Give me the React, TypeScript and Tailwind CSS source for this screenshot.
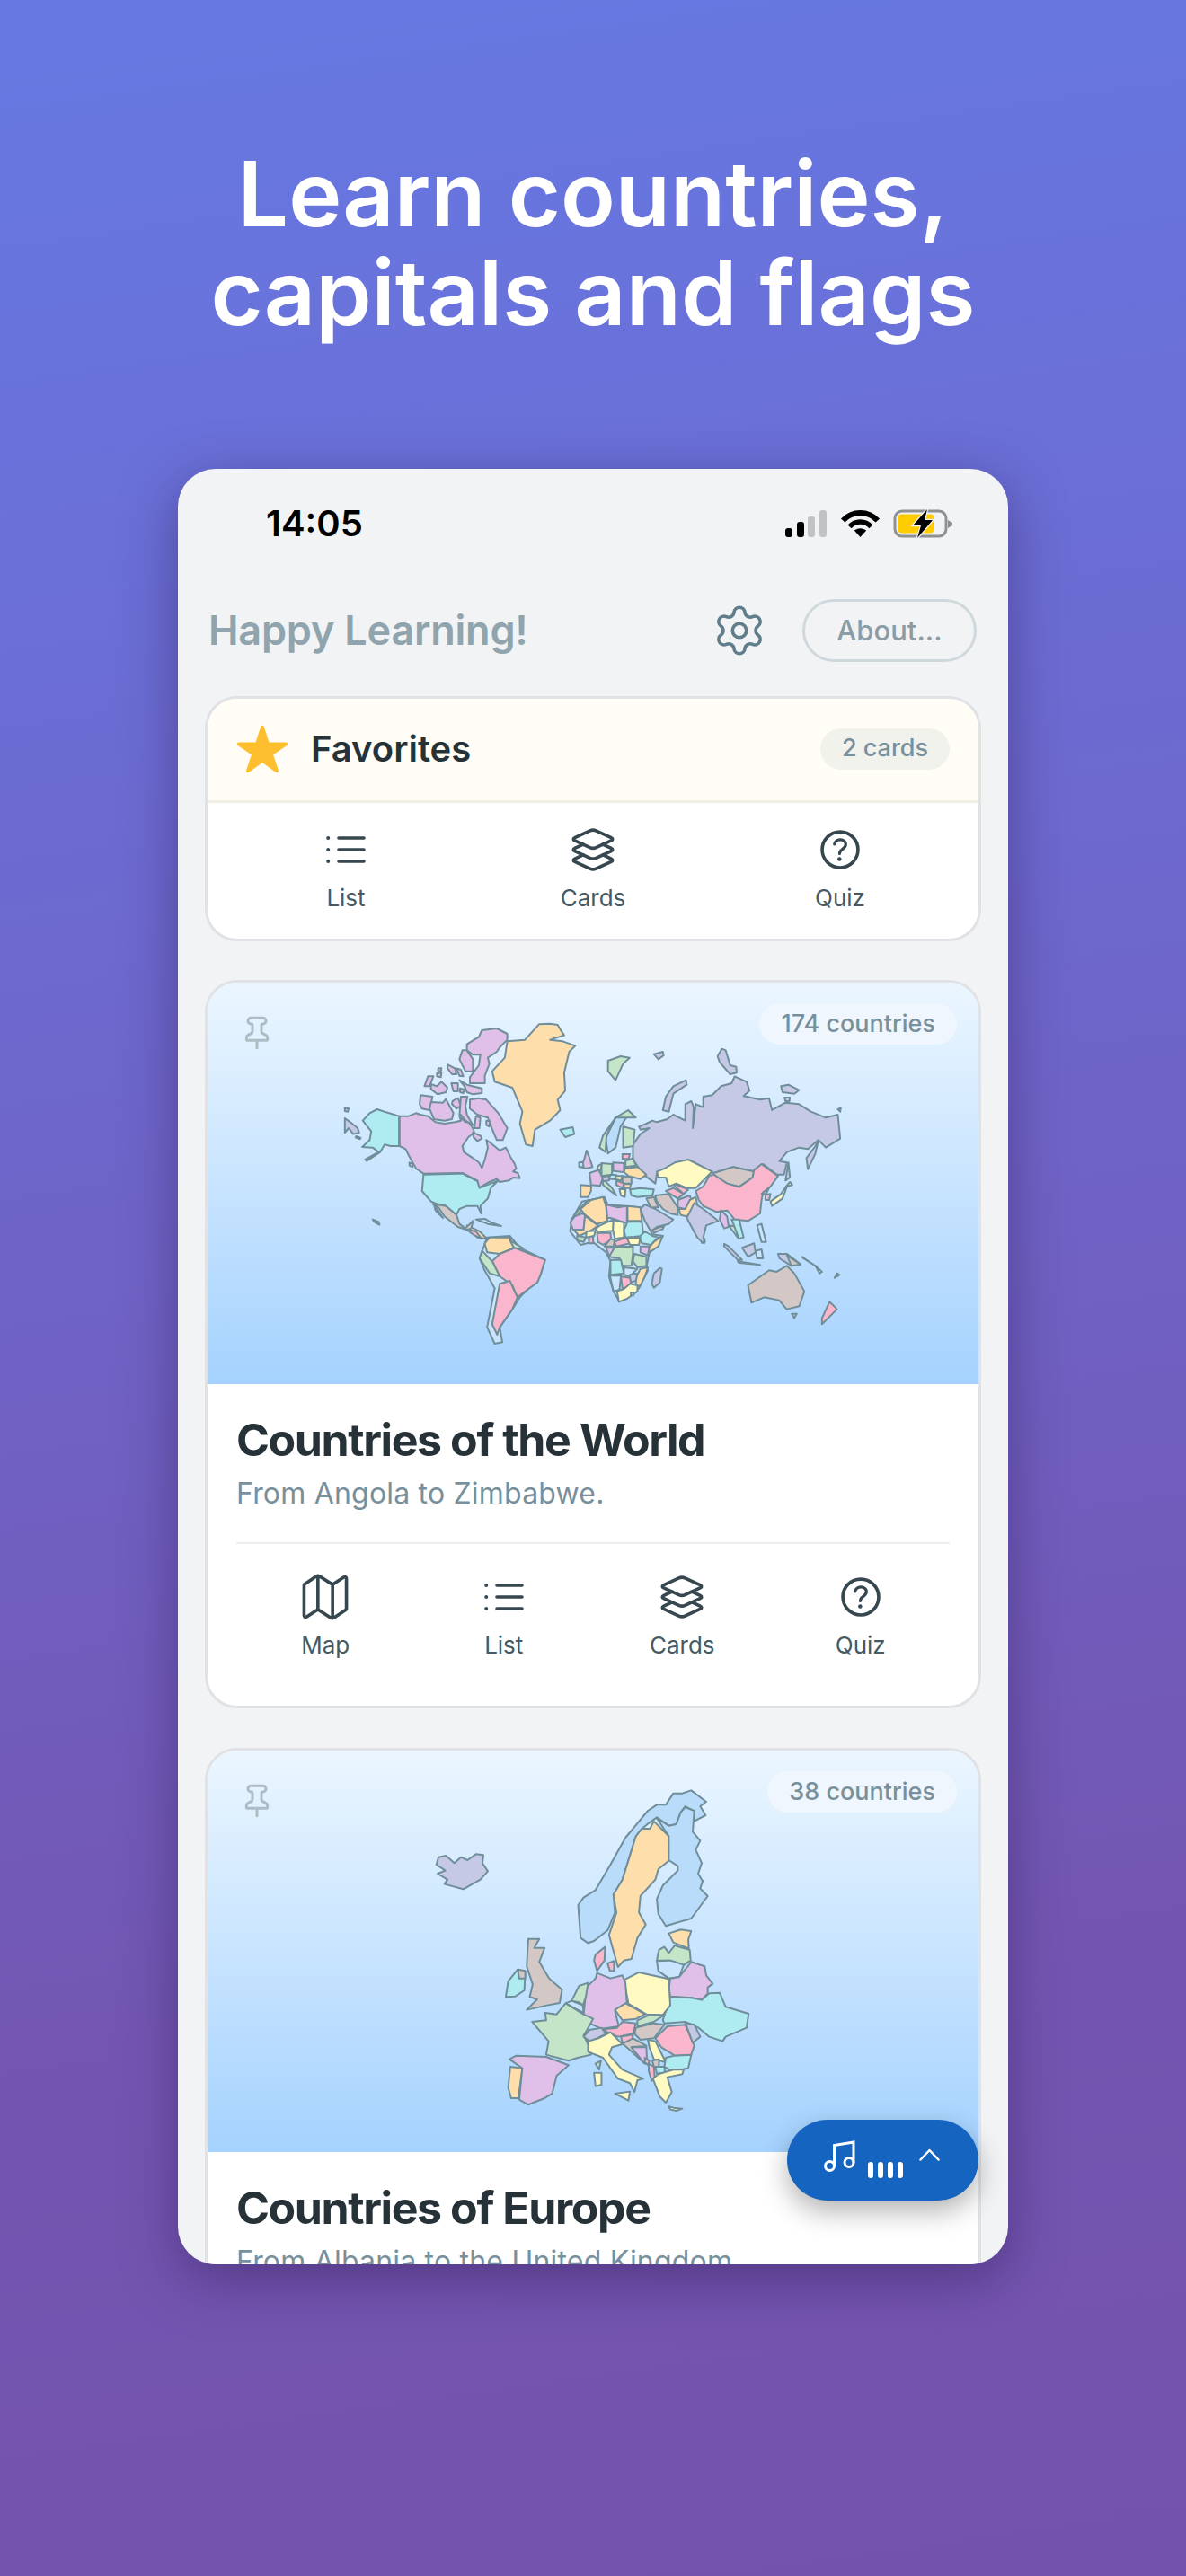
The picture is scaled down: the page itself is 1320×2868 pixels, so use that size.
import type { FC, ReactNode } from "react";
import { IoHelpCircleOutline, IoLayersOutline, IoMapOutline, IoStar } from "react-icons/io5";
import { Pin, Settings } from "lucide-react";

const purple = "#e0bfe8";
const cyan = "#aeecf2";
const orange = "#fedeab";
const lav = "#c5c9e6";
const yellow = "#fff9c2";
const pink = "#f9b6cc";
const green = "#c5e5c8";
const taupe = "#d4c8c6";
const water = "#c9e4fd";
const nordic = "#b8dcfa";

type Shape = [string, string];

const greenlandSouth: Shape[] = [
  [orange, "678,178 700,176 715,180 722,200 728,215 700,230 725,235 750,250 738,270 735,290 728,340 730,400 715,430 720,465 700,500 670,530 665,585 652,580 640,510 645,470 625,390 590,370 585,335 610,290 615,235 650,230"],
  [cyan, "720,530 745,522 748,545 730,555"],
  [green, "815,300 840,285 858,290 845,310 830,365 815,335"],
  [nordic, "855,480 840,520 830,590 815,610 810,560 830,490"],
  [green, "855,465 870,490 830,490 812,550 810,605 798,590 805,550 830,490"],
  [green, "845,520 868,530 865,585 845,590"],
  [water, "575,890 620,885 640,925 690,965 680,1020 640,1090 625,1130 600,1190 605,1240 590,1245 575,1190 590,1060 570,1000 560,960"],
  [orange, "580,890 620,890 628,925 600,945 575,940 570,910"],
  [green, "620,900 645,925 630,930"],
  [pink, "600,945 630,925 660,945 690,965 682,1010 675,1040 635,1090 625,1050 600,1020 585,970"],
  [green, "565,935 585,970 600,1020 580,1010 560,960"],
  [pink, "600,1045 620,1035 635,1090 625,1130 600,1190 595,1215 585,1180"],
  [orange, "535,850 555,890 575,895 560,870"],
  [taupe, "1135,1000 1150,1005 1170,985 1185,1010 1205,1070 1195,1120 1170,1130 1155,1100 1125,1090 1100,1108 1093,1050"],
  [taupe, "1180,1145 1190,1145 1185,1160"],
  [pink, "1255,1105 1270,1130 1240,1180 1240,1160"],
  [water, "1227,985 1240,1005 1235,1010"],
  [water, "1270,1010 1275,1015 1265,1025"],
];

const northAmerica: Shape[] = [
  [purple, "195,305 225,305 250,295 265,300 290,305 315,325 345,330 380,325 400,320 395,305 415,325 425,325 440,345 445,360 425,375 405,405 410,425 440,445 460,460 470,478 480,450 490,410 485,385 500,395 530,420 550,410 565,440 580,465 585,480 575,490 590,495 597,512 575,510 560,520 530,525 520,515 495,525 460,545 455,520 405,495 275,497 250,480 225,435 215,415 195,405"],
  [cyan, "120,282 150,292 193,305 193,405 165,405 145,400 130,425 85,455 80,450 125,425 105,410 70,408 95,385 100,355 72,320 95,295"],
  [lav, "12,312 30,325 55,345 60,360 40,365 25,345 12,360"],
  [lav, "12,278 25,280 22,290 12,288"],
  [lav, "50,372 65,378 62,382 48,376"],
  [purple, "420,65 460,40 470,18 520,12 555,30 555,50 530,75 520,90 490,110 495,130 480,170 480,195 430,195 430,175 460,135 465,100 440,100 420,85"],
  [purple, "405,85 420,85 440,115 440,155 415,155 395,115"],
  [purple, "356,133 380,145 385,165 370,165 355,145"],
  [purple, "385,145 400,150 408,172 395,170"],
  [purple, "325,145 335,145 333,155 323,152"],
  [purple, "320,162 335,160 333,175 320,172"],
  [purple, "290,172 308,172 295,205 278,205"],
  [purple, "300,198 320,205 335,190 355,210 350,225 322,232 300,215"],
  [purple, "368,195 390,195 390,222 375,222"],
  [purple, "395,185 420,200 470,212 470,228 440,232 420,225 412,205"],
  [purple, "397,212 410,215 408,228 397,225"],
  [purple, "265,235 305,240 295,285 270,280 262,265"],
  [purple, "300,258 340,260 350,248 375,295 370,315 345,320 310,315 295,280"],
  [purple, "372,255 390,245 400,270 385,280 370,265"],
  [purple, "400,240 422,240 415,270 420,300 440,335 415,320 400,300 395,305"],
  [purple, "430,250 460,245 485,250 525,295 555,345 540,385 520,385 505,350 490,310 455,300 430,280"],
  [purple, "450,305 465,310 462,345 445,345"],
  [purple, "485,320 497,322 495,340 485,335"],
  [purple, "440,360 465,370 470,380 455,388 442,375"],
  [purple, "228,460 240,465 238,475 228,470"],
  [cyan, "275,500 405,497 455,522 462,545 500,530 525,520 500,545 490,580 465,605 468,630 455,605 420,605 395,615 385,635 350,605 320,598 300,590 270,555"],
  [taupe, "305,598 350,605 385,635 395,665 415,680 440,655 435,680 420,685 390,675 345,640 325,610"],
  [taupe, "310,600 340,645 315,620"],
  [lav, "105,650 125,658 128,668 110,658"],
  [water, "450,650 480,648 500,660 535,672 490,665"],
  [pink, "420,685 450,690 470,715 440,700"],
];

const asia: Shape[] = [
  [lav, "15,340 40,305 70,285 40,290 35,280 60,270 80,260 95,265 130,255 150,240 190,260 190,205 210,195 218,215 215,285 225,205 250,215 250,180 280,175 310,145 345,135 355,112 395,130 405,160 385,178 440,190 470,185 480,225 525,200 570,205 610,230 660,250 700,240 708,320 660,350 635,325 600,355 570,350 530,365 505,395 530,400 520,440 495,440 450,405 420,430 350,415 285,435 265,425 210,395 155,410 95,435 90,470 50,440 15,390"],
  [lav, "312,20 325,25 340,75 360,80 362,100 340,105 305,65 298,45"],
  [lav, "192,125 195,140 150,170 135,230 115,225 125,180 150,145"],
  [lav, "85,38 115,30 118,42 100,55"],
  [lav, "510,145 535,140 570,158 555,170 515,165"],
  [lav, "522,183 540,183 538,195 525,195"],
  [lav, "700,222 710,218 708,230"],
  [lav, "635,325 625,370 600,422 595,385 625,345"],
  [lav, "535,400 540,450 525,460"],
  [taupe, "285,435 350,415 420,430 415,450 370,480 330,470 285,450"],
  [pink, "225,495 250,480 270,445 285,440 330,470 370,482 415,450 420,425 445,405 465,420 500,445 475,480 450,500 445,525 440,570 400,595 355,590 330,560 295,565 250,545 235,525"],
  [yellow, "445,505 470,485 460,505"],
  [pink, "458,508 475,505 470,525 458,525"],
  [yellow, "540,465 548,475 530,480 515,520 480,545 475,530 510,505 527,480"],
  [purple, "310,560 330,580 335,615 320,620 305,590"],
  [green, "335,610 365,615 378,640 365,650 350,630"],
  [cyan, "345,590 370,590 385,650 370,655"],
  [lav, "320,672 335,680 380,725 365,725 320,680"],
  [water, "365,730 440,742 370,735"],
  [lav, "380,685 420,670 425,700 400,715"],
  [water, "430,610 445,605 460,665 445,665"],
  [water, "425,695 445,690 450,720 430,720"],
  [lav, "500,705 530,705 575,740 545,745 505,720"],
  [taupe, "530,710 575,740 545,745"],
  [water, "580,715 625,745 585,720"],
  [lav, "245,655 255,655 255,668 245,668"],
];

const afroEurasia: Shape[] = [
  [water, "55,170 130,155 140,180 200,185 250,190 265,230 290,280 325,285 280,340 270,390 275,400 245,460 215,480 180,505 160,470 145,420 150,370 135,340 90,305 50,315 15,270 20,230"],
  [green, "45,195 75,165 85,170 55,195 25,235 18,232"],
  [orange, "85,165 125,155 135,185 140,235 105,245 65,215 50,195"],
  [purple, "135,180 175,190 205,185 205,240 195,240 150,225 140,225"],
  [orange, "207,185 250,190 255,235 207,235"],
  [purple, "30,220 55,210 65,215 60,265 25,265 15,240"],
  [orange, "65,218 105,248 110,250 80,270 45,285 28,265 60,265"],
  [yellow, "115,250 160,230 160,268 130,270 110,275 100,262"],
  [yellow, "160,232 195,240 195,290 165,295 158,265"],
  [cyan, "207,238 255,238 260,285 200,290 195,265"],
  [cyan, "265,270 290,285 310,290 285,315 255,310 245,290"],
  [orange, "325,285 310,320 280,340 278,325 295,305 315,290"],
  [pink, "105,275 150,275 152,300 125,315 108,305"],
  [yellow, "70,270 100,268 95,285 68,290"],
  [pink, "78,288 92,288 92,310 78,310"],
  [green, "38,285 68,290 60,305 40,300"],
  [taupe, "150,295 165,300 160,320 130,320"],
  [pink, "162,305 205,290 215,310 170,320"],
  [yellow, "205,292 250,290 245,315 215,315"],
  [purple, "135,325 160,325 160,350 145,350"],
  [green, "165,322 225,320 225,345 220,385 190,385 180,360 145,355"],
  [purple, "250,320 280,320 275,350 250,340"],
  [green, "230,345 270,355 270,385 240,390 225,370"],
  [cyan, "150,365 185,365 190,390 195,410 150,415"],
  [water, "195,390 240,395 215,420 195,415"],
  [orange, "250,395 275,390 265,420 250,450 235,455 235,425"],
  [lav, "215,415 240,410 235,435 215,440"],
  [water, "148,418 185,418 180,465 160,470"],
  [pink, "185,420 215,425 220,450 190,462"],
  [yellow, "172,470 195,462 215,445 240,450 240,470 205,495 178,505"],
  [taupe, "218,474 227,474 227,484 218,484"],
  [lav, "315,392 322,395 315,440 295,458 288,445 295,410"],
  [lav, "250,195 265,180 300,195 350,225 360,230 345,245 305,255 285,270 265,235"],
  [taupe, "290,265 330,250 325,262 295,275"],
  [cyan, "215,130 250,125 295,130 290,150 240,155 220,150"],
  [taupe, "300,150 345,145 375,190 375,215 350,210 325,195 305,170"],
  [taupe, "270,160 295,155 310,190 285,190"],
  [purple, "375,165 415,150 420,165 400,195 375,190"],
  [orange, "415,165 435,155 440,180 405,220 385,215 378,195 400,195"],
  [pink, "335,135 360,125 395,145 375,160"],
  [pink, "350,105 385,120 410,130 395,145 360,115"],
  [yellow, "305,70 330,60 365,40 410,30 440,45 490,70 455,105 435,125 405,125 370,110 345,120 335,90 310,90"],
  [lav, "430,175 460,195 510,235 470,250 460,290 465,305 455,305 440,290 405,225"],
  [purple, "70,0 78,20 90,55 68,60 50,55 62,30"],
  [cyan, "45,40 58,38 60,55 45,55"],
  [purple, "80,75 110,65 125,90 115,118 85,115"],
  [orange, "50,115 85,118 85,135 75,155 50,155"],
  [green, "120,42 155,45 155,80 120,85"],
  [purple, "158,40 195,42 195,72 160,68"],
  [orange, "198,60 240,55 270,80 250,95 210,85 195,72"],
  [green, "200,35 225,25 235,50 200,55"],
  [pink, "190,12 215,12 210,28 190,28"],
  [taupe, "190,85 220,90 220,110 190,110"],
  [green, "125,95 155,125 170,150 150,135 125,115"],
  [yellow, "165,85 190,85 185,100 165,95"],
  [pink, "170,100 195,110 190,125 170,115"],
  [orange, "195,112 218,112 215,125 195,125"],
  [yellow, "180,128 200,130 198,155 185,150"],
  [cyan, "150,80 170,82 165,95 145,95"],
  [lav, "122,88 145,85 145,100 125,102"],
  [orange, "110,50 120,45 118,65 105,62"],
];

const europe: Shape[] = [
  [lav, "18,270 25,245 50,240 78,265 100,245 122,255 150,235 175,238 172,265 190,292 165,320 108,352 45,335 55,320 22,300 48,290"],
  [nordic, "785,70 810,32 840,32 870,22 920,60 900,75 918,105 880,125 875,90 850,75 835,95 820,135 795,140 755,112 730,130 705,150 685,175 640,320 610,370 615,430 590,490 545,525 525,532 500,515 492,405 510,380 550,355 600,270 650,180 725,90 755,70"],
  [orange, "745,125 795,175 798,255 760,285 750,320 700,375 695,430 718,470 690,515 670,585 645,590 625,612 595,505 620,430 610,370 640,320 685,175 705,150 732,150"],
  [nordic, "835,95 850,78 880,90 875,160 900,190 885,220 905,265 893,300 908,325 900,350 925,375 870,450 785,475 760,435 755,385 775,340 825,290 825,275 795,255 795,175 755,115 795,140 820,135"],
  [orange, "795,500 835,487 870,492 860,520 862,550 810,530"],
  [green, "755,590 762,555 780,545 795,565 815,540 865,555 868,590 845,605 800,590"],
  [water, "755,592 800,590 845,605 830,645 795,650 760,625"],
  [purple, "800,650 830,645 870,595 915,610 920,640 942,668 925,680 925,700 905,722 870,715 800,710 795,690"],
  [cyan, "800,712 870,715 905,722 930,700 965,698 985,745 1062,768 1055,815 985,845 975,860 930,845 895,815 850,795 780,800 775,790"],
  [yellow, "645,655 695,630 795,652 800,740 775,772 720,770 660,735"],
  [purple, "555,632 600,650 640,640 650,665 655,735 615,760 628,810 570,818 530,800 510,770 520,680 550,650"],
  [pink, "550,570 582,545 580,590 555,625 545,590"],
  [pink, "590,600 612,592 612,625 598,625"],
  [water, "470,725 508,740 510,765 480,750 450,733"],
  [green, "470,725 495,675 525,665 518,710 508,740 495,730"],
  [green, "450,733 510,770 542,785 520,825 510,840 530,880 535,905 490,915 460,925 385,905 393,860 338,795 385,790 382,765 420,770"],
  [taupe, "325,518 362,518 345,548 380,548 362,595 395,650 438,688 430,732 388,740 320,755 355,720 330,712 340,670 320,610"],
  [cyan, "290,620 315,630 312,690 282,710 250,712 258,660"],
  [taupe, "290,620 315,625 315,650 295,650"],
  [purple, "262,920 285,908 385,912 460,940 420,975 405,1035 380,1050 325,1072 295,1055 305,950"],
  [orange, "265,945 305,950 292,1050 268,1050 258,1015"],
  [orange, "615,755 650,733 690,755 715,770 685,785 640,790"],
  [green, "690,790 730,772 775,775 745,795 690,810"],
  [taupe, "685,815 745,800 780,805 745,850 700,855 680,835"],
  [pink, "575,820 622,815 640,795 685,800 675,835 625,845 590,830"],
  [lav, "510,845 530,822 570,815 585,835 555,850 530,860"],
  [yellow, "525,860 560,850 600,830 640,870 605,880 595,905 640,955 710,985 690,990 680,1030 665,1000 625,985 575,915 525,895"],
  [yellow, "545,965 570,965 570,1005 550,1010"],
  [green, "550,935 568,925 562,955"],
  [yellow, "615,1035 665,1028 660,1058"],
  [pink, "635,845 675,838 672,862 640,865"],
  [taupe, "640,868 675,850 720,875 670,880 715,935 660,885"],
  [purple, "670,880 720,880 722,925 710,930"],
  [yellow, "725,855 750,860 785,930 745,920 730,880"],
  [pink, "750,850 790,810 850,805 880,875 870,905 815,908 770,880"],
  [lav, "850,798 880,805 900,845 875,865"],
  [cyan, "785,915 815,908 870,905 860,950 805,960 780,945"],
  [cyan, "750,945 780,945 782,965 755,968"],
  [pink, "728,935 745,945 748,985 738,992 728,960"],
  [pink, "715,915 730,925 725,940 715,930"],
  [taupe, "740,925 762,920 762,945 745,945"],
  [yellow, "760,970 810,955 845,955 840,970 790,980 805,1030 785,1065 765,1045 742,985"],
  [yellow, "795,1078 810,1082 840,1085 820,1092 800,1088"],
];

const Shapes: FC<{ shapes: Shape[]; at: string }> = ({ shapes, at }) => (
  <g transform={at}>
    {shapes.map(([fill, pts], i) => (
      <polygon
        key={i}
        points={pts}
        fill={fill}
        stroke="#6f8e9a"
        strokeWidth={2}
        strokeLinejoin="round"
        vectorEffect="non-scaling-stroke"
      />
    ))}
  </g>
);

const WorldMap: FC = () => (
  <svg viewBox="0 0 859 447" preserveAspectRatio="none" className="absolute inset-0 w-full h-full">
    <Shapes shapes={asia} at="translate(469,67) scale(0.3333)" />
    <Shapes shapes={afroEurasia} at="translate(399,187) scale(0.3333)" />
    <Shapes shapes={greenlandSouth} at="translate(-11,-13) scale(0.561,0.3333)" />
    <Shapes shapes={northAmerica} at="translate(149,47) scale(0.3333)" />
  </svg>
);

const EuropeMap: FC = () => (
  <svg viewBox="0 0 859 447" preserveAspectRatio="none" className="absolute inset-0 w-full h-full">
    <Shapes shapes={europe} at="translate(249,37) scale(0.3333)" />
  </svg>
);

const ListIcon: FC = () => (
  <svg width="44" height="34" viewBox="0 0 44 34" fill="none" stroke="currentColor" strokeWidth="3.6" strokeLinecap="round">
    <path d="M14 4H42M14 17H42M14 30H42" />
    <circle cx="2.2" cy="4" r="2" fill="currentColor" stroke="none" />
    <circle cx="2.2" cy="17" r="2" fill="currentColor" stroke="none" />
    <circle cx="2.2" cy="30" r="2" fill="currentColor" stroke="none" />
  </svg>
);

const Action: FC<{ icon: ReactNode; label: string; width: string }> = ({ icon, label, width }) => (
  <div className={`flex flex-col items-center ${width}`}>
    <div className="h-[50px] flex items-center justify-center text-[#37474f]">{icon}</div>
    <span className="mt-[11px] text-[26px] leading-[36px] text-[#455a64]">{label}</span>
  </div>
);

const Card: FC<{
  map: ReactNode;
  count: string;
  title: string;
  sub: string;
  actions?: boolean;
  className?: string;
}> = ({ map, count, title, sub, actions, className }) => (
  <div className={`mx-[30px] shrink-0 rounded-[36px] border-[3px] border-[#e0e2e6] bg-white overflow-hidden ${className}`}>
    <div className="relative h-[447px] bg-[linear-gradient(180deg,#ebf6ff,#a5d2fe)]">
      {map}
      <Pin size={40} strokeWidth={1.8} className="absolute left-[35px] top-[36px] text-[#aebcc3]" />
      <div className="absolute right-[24px] top-[23px] h-[46px] px-[24px] flex items-center rounded-full bg-[#eff6fd] text-[27px] font-medium text-[#78909c]">
        {count}
      </div>
    </div>
    <div className="px-[32px]">
      <h3 className="mt-[34px] text-[50px] leading-[56px] font-bold tracking-[-1.4px] text-[#263238]">{title}</h3>
      <p className="mt-[10px] text-[32px] leading-[44px] tracking-[0.2px] text-[#78909c]">{sub}</p>
      {actions && (
        <>
          <div className="mt-[32px] h-[2px] bg-[#eeeeee]" />
          <div className="mt-[34px] flex justify-center">
            <Action icon={<IoMapOutline size={58} />} label="Map" width="w-[199px]" />
            <Action icon={<ListIcon />} label="List" width="w-[199px]" />
            <Action icon={<IoLayersOutline size={58} />} label="Cards" width="w-[199px]" />
            <Action icon={<IoHelpCircleOutline size={58} />} label="Quiz" width="w-[199px]" />
          </div>
        </>
      )}
    </div>
  </div>
);

const StatusIcons: FC = () => (
  <svg width="186" height="32" viewBox="0 0 186 32">
    <rect x="0" y="21" width="8" height="10" rx="3" fill="#000" />
    <rect x="13" y="14" width="8" height="17" rx="3" fill="#000" />
    <rect x="25" y="8" width="8" height="23" rx="3" fill="#c0c3c6" />
    <rect x="38" y="1" width="8" height="30" rx="3" fill="#c0c3c6" />
    <path d="M64.2 12.6 A26 26 0 0 1 102.8 12.6" fill="none" stroke="#000" strokeWidth="6" />
    <path d="M71.6 19.3 A16 16 0 0 1 95.4 19.3" fill="none" stroke="#000" strokeWidth="5.5" />
    <path d="M83.5 31 L76.8 23.5 Q83.5 19 90.2 23.5 Z" fill="#000" />
    <rect x="122" y="2" width="57" height="28" rx="8" fill="none" stroke="#8e9092" strokeWidth="3" />
    <rect x="125.500" y="5.500" width="40" height="21" rx="4" fill="#ffcc00" />
    <path d="M181 12 L186 15 L186 18 L181 21 Z" fill="#8e9092" />
    <path d="M158 0 L142 18 L151 18 L147 32 L164 12 L155 12 Z" fill="#000" stroke="#f2f3f5" strokeWidth="2.500" paintOrder="stroke" />
  </svg>
);

const App: FC = () => {
  return (
    <div className="w-[1320px] h-[2868px] overflow-hidden flex flex-col items-center bg-[linear-gradient(172deg,#6679e3_0%,#6d69cf_35%,#7356b2_75%,#7352ad_100%)] font-['Inter',sans-serif]">
      <h1 className="mt-[161px] text-center text-[100px] leading-[110px] font-semibold text-white">
        Learn countries,
        <br />
        capitals and flags
      </h1>
      <div className="relative mt-[141px] w-[924px] h-[1999px] shrink-0 rounded-[42px] overflow-hidden bg-[#f2f3f5] shadow-[0_16px_60px_rgba(50,30,90,0.5)] flex flex-col">
        <div className="h-[122px] shrink-0 flex items-center justify-between pl-[98px] pr-[62px]">
          <span className="text-[40px] font-semibold text-black">14:05</span>
          <StatusIcons />
        </div>
        <div className="mt-[23px] h-[70px] shrink-0 flex items-center pl-[34px] pr-[35px]">
          <span className="text-[45px] font-semibold tracking-[-0.2px] text-[#90a4ae]">Happy Learning!</span>
          <Settings size={62} strokeWidth={1.4} className="ml-auto text-[#607d8b]" />
          <div className="ml-[39px] w-[194px] h-[70px] rounded-full border-[3px] border-[#cfd8dc] flex items-center justify-center text-[31px] font-medium text-[#8a9ca5]">
            About...
          </div>
        </div>
        <div className="mt-[38px] mx-[30px] h-[273px] shrink-0 rounded-[36px] border-[3px] border-[#e0e2e6] bg-white overflow-hidden">
          <div className="h-[116px] pb-[2px] bg-[#fffdf5] border-b-[3px] border-[#f0efe5] flex items-center pl-[31px] pr-[32px]">
            <IoStar size={60} className="text-[#fdbf2d]" />
            <span className="ml-[24px] text-[40px] font-semibold text-[#263238]">Favorites</span>
            <span className="ml-auto h-[46px] w-[144px] rounded-full bg-[#f2f2ec] flex items-center justify-center text-[27px] font-medium text-[#78909c]">
              2 cards
            </span>
          </div>
          <div className="mt-[27px] flex justify-center">
            <Action icon={<ListIcon />} label="List" width="w-[275px]" />
            <Action icon={<IoLayersOutline size={58} />} label="Cards" width="w-[275px]" />
            <Action icon={<IoHelpCircleOutline size={58} />} label="Quiz" width="w-[275px]" />
          </div>
        </div>
        <Card
          map={<WorldMap />}
          count="174 countries"
          title="Countries of the World"
          sub="From Angola to Zimbabwe."
          actions
          className="mt-[43px] h-[811px]"
        />
        <Card
          map={<EuropeMap />}
          count="38 countries"
          title="Countries of Europe"
          sub="From Albania to the United Kingdom."
          className="mt-[44px] h-[810px]"
        />
        <div className="absolute left-[678px] top-[1838px] w-[213px] h-[90px] rounded-full bg-[#1565c0] shadow-[0_12px_30px_rgba(0,0,0,0.3)] flex items-center pl-[41px] text-white">
          <svg width="37" height="36" viewBox="0 0 37 36" fill="none" stroke="currentColor" strokeWidth="3" className="-mt-[8px]">
            <circle cx="6.500" cy="28.500" r="5" />
            <circle cx="28" cy="24.500" r="5" />
            <path d="M11.500 28.500V5.500L33 2V24.500" />
          </svg>
          <div className="ml-[12px] mt-[22px] flex gap-[5px]">
            <span className="w-[6px] h-[18px] rounded-full bg-white" />
            <span className="w-[6px] h-[18px] rounded-full bg-white" />
            <span className="w-[6px] h-[18px] rounded-full bg-white" />
            <span className="w-[6px] h-[18px] rounded-full bg-white" />
          </div>
          <svg width="23" height="14" viewBox="0 0 23 14" fill="none" stroke="currentColor" strokeWidth="2.500" strokeLinecap="round" strokeLinejoin="round" className="ml-[18px] -mt-[12px]">
            <path d="M1.500 12.500L11.500 2L21.500 12.500" />
          </svg>
        </div>
      </div>
    </div>
  );
};

export default App;
